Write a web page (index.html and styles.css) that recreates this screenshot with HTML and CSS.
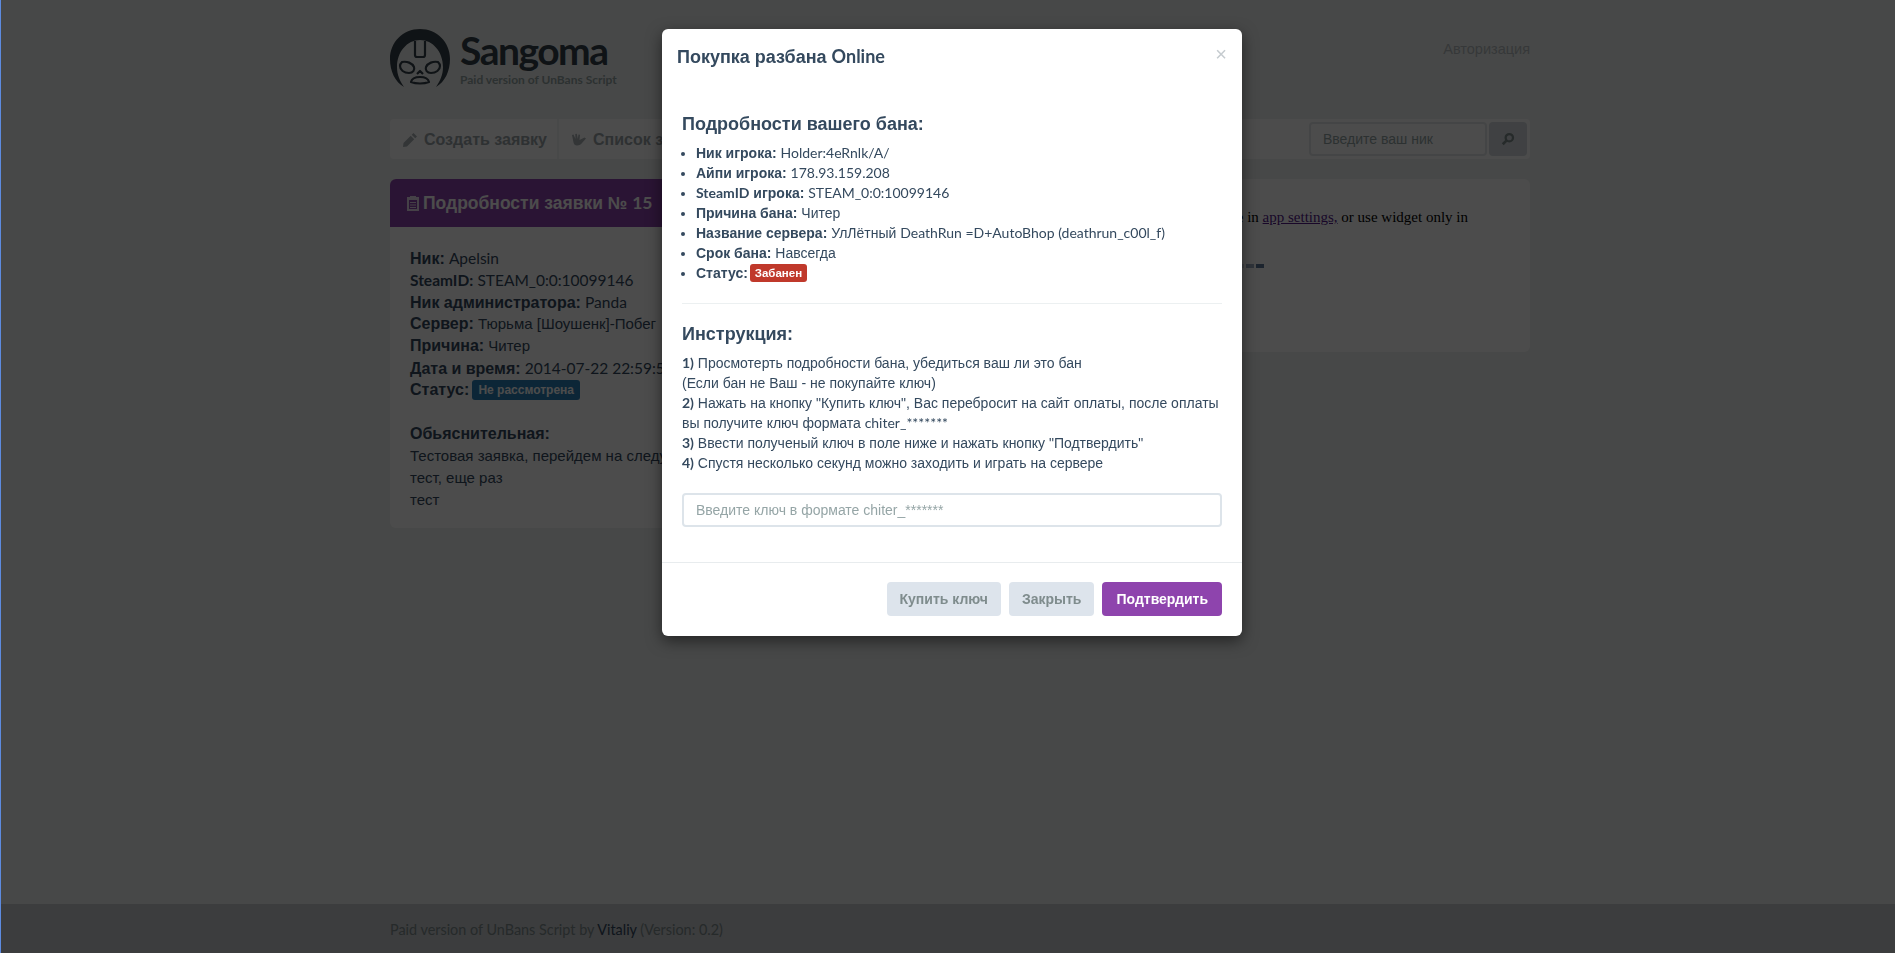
FILE: index.html
```html
<!DOCTYPE html>
<html lang="ru">
<head>
    <meta charset="UTF-8">
    <meta name="viewport" content="width=device-width, initial-scale=1.0">
    <title>Sangoma</title>
    <link rel="stylesheet" href="styles.css">
</head>
<body>
    <div class="container">
        <header class="top">
            <div class="logo">
                <svg class="logo-icon" viewBox="0 0 60 60">
                    <path d="M14 58C5 53 0 42 0 30 0 13 13 0 30 0s30 13 30 30c0 12-5 23-14 28 4-6 7-12 7-20 0-15-10-27-23-27S7 23 7 38c0 8 3 14 7 20z" fill="#35404a"/>
                    <path d="M25 12v14c0 1 1 2 2 2h6c1 0 2-1 2-2V12M12 33c5-1 10 1 12 5 1 3-1 6-5 6-5 0-9-3-9-7 0-2 1-3 2-4zM48 33c-5-1-10 1-12 5-1 3 1 6 5 6 5 0 9-3 9-7 0-2-1-3-2-4zM21 53c1-4 4-5 9-5s8 1 9 5c-5 2-13 2-18 0zM27 45l3-3 3 3" fill="none" stroke="#35404a" stroke-width="2.200" stroke-linejoin="round"/>
                </svg>
                <div>
                    <div class="logo-name">Sangoma</div>
                    <div class="logo-sub">Paid version of UnBans Script</div>
                </div>
            </div>
            <a class="login-link">Авторизация</a>
        </header>

        <nav class="menu">
            <a class="menu-item">
                <svg class="menu-icon" viewBox="0 0 16 16"><path d="M11.500 1l3.500 3.500-1.800 1.800-3.500-3.500zM8.700 3.800l3.500 3.500L5 14.500 1 15l.5-4z"/></svg>
                Создать заявку
            </a>
            <a class="menu-item">
                <svg class="menu-icon" viewBox="0 0 16 16"><path d="M1 3l1.500-.5L4.500 7l-.2-5 1.500-.2L6.800 7l.7-4.500 1.500.3L8.500 8l5-2.500 1.500 1-4 4.500c-1 1.500-2.500 2.500-5 2.500-2 0-3-1-3.500-3z"/></svg>
                Список заявок
            </a>
            <form class="menu-search">
                <input class="search-input" type="text" placeholder="Введите ваш ник">
                <button class="search-btn" type="button">
                    <svg viewBox="0 0 16 16" width="14" height="14"><circle cx="9.500" cy="6.500" r="4.200" fill="none" stroke="#7f8c8d" stroke-width="2.600"/><path d="M6.500 9.500L2 14" stroke="#7f8c8d" stroke-width="3"/></svg>
                </button>
            </form>
        </nav>

        <div class="columns">
            <section class="panel panel-ticket">
                <h3 class="panel-head">
                    <svg class="head-icon" viewBox="0 0 14 16"><path d="M1 2h3V1h6v1h3v14H1zM3 5v9h8V5zM4 7h6v1H4zM4 9.500h6v1H4zM4 12h6v1H4z" fill="#fff" fill-rule="evenodd"/></svg>
                    <span>Подробности заявки № <span class="lat">15</span></span>
                </h3>
                <div class="panel-body">
                    <p><b>Ник:</b> <span class="lat">Apelsin</span></p>
                    <p><b class="lat">SteamID:</b> <span class="lat">STEAM_0:0:10099146</span></p>
                    <p><b>Ник администратора:</b> <span class="lat">Panda</span></p>
                    <p><b>Сервер:</b> Тюрьма [Шоушенк]-Побег</p>
                    <p><b>Причина:</b> Читер</p>
                    <p><b>Дата и время:</b> <span class="lat">2014-07-22 22:59:58</span></p>
                    <p><b>Статус:</b> <span class="badge badge-blue">Не рассмотрена</span></p>
                    <p class="gap"><b>Обьяснительная:</b></p>
                    <p>Тестовая заявка, перейдем на следующий шаг</p>
                    <p>тест, еще раз</p>
                    <p>тест</p>
                </div>
            </section>
            <aside class="panel panel-widget">
                <p class="widget-error">Add this site in <a href="#">app settings,</a> or use widget only in</p>
                <div class="widget-dots"><i></i><i></i><i></i></div>
            </aside>
        </div>
    </div>

    <footer class="footer">
        <div class="footer-text">Paid version of UnBans Script by <b>Vitaliy</b> (Version: 0.2)</div>
    </footer>

    <div class="backdrop"></div>

    <div class="modal">
        <div class="modal-head">
            <span class="modal-title">Покупка разбана <span class="lat">Online</span></span>
            <span class="modal-close">×</span>
        </div>
        <div class="modal-body">
            <h5>Подробности вашего бана:</h5>
            <ul class="ban-list">
                <li><b>Ник игрока:</b> <span class="lat">Holder:4eRnlk/A/</span></li>
                <li><b>Айпи игрока:</b> <span class="lat">178.93.159.208</span></li>
                <li><b><span class="lat">SteamID</span> игрока:</b> <span class="lat">STEAM_0:0:10099146</span></li>
                <li><b>Причина бана:</b> Читер</li>
                <li><b>Название сервера:</b> УлЛётный <span class="lat">DeathRun =D+AutoBhop (deathrun_c00l_f)</span></li>
                <li><b>Срок бана:</b> Навсегда</li>
                <li><b>Статус:</b> <span class="badge badge-red">Забанен</span></li>
            </ul>
            <hr class="divider">
            <h5>Инструкция:</h5>
            <div class="steps">
                <b class="lat">1)</b> Просмотерть подробности бана, убедиться ваш ли это бан<br>
                (Если бан не Ваш - не покупайте ключ)<br>
                <b class="lat">2)</b> Нажать на кнопку "Купить ключ", Вас перебросит на сайт оплаты, после оплаты<br>
                вы получите ключ формата <span class="lat">chiter_*******</span><br>
                <b class="lat">3)</b> Ввести полученый ключ в поле ниже и нажать кнопку "Подтвердить"<br>
                <b class="lat">4)</b> Спустя несколько секунд можно заходить и играть на сервере
            </div>
            <input class="key-input" type="text" placeholder="Введите ключ в формате chiter_*******">
        </div>
        <div class="modal-foot">
            <button class="btn btn-grey" type="button">Купить ключ</button>
            <button class="btn btn-grey" type="button">Закрыть</button>
            <button class="btn btn-purple" type="button">Подтвердить</button>
        </div>
    </div>
</body>
</html>
```
FILE: styles.css
```css
* {
    box-sizing: border-box;
}

body {
    display: flex;
    flex-direction: column;
    min-height: 100vh;
    margin: 0;
    background-color: #eff2f0;
    color: #34495e;
    font-family: "Liberation Sans", Arial, sans-serif;
    font-size: 15px;
    overflow: hidden;
}

.lat {
    font-family: Lato, sans-serif;
}

.container {
    width: 1140px;
    margin-left: 390px;
}

.top {
    display: flex;
    justify-content: space-between;
    padding-top: 29px;
    height: 119px;
}

.logo {
    display: flex;
    gap: 10px;
}

.logo-icon {
    width: 60px;
    height: 60px;
}

.logo-name {
    font-family: Lato, sans-serif;
    font-size: 39px;
    font-weight: bold;
    letter-spacing: -1.500px;
    line-height: 40px;
    margin-top: 1px;
    color: #35404a;
}

.logo-sub {
    font-family: Lato, sans-serif;
    font-size: 12px;
    font-weight: bold;
    color: #95a5a6;
    margin-top: 2px;
}

.login-link {
    font-size: 14.500px;
    color: #b5bcc0;
    margin-top: 12px;
}

.menu {
    display: flex;
    align-items: center;
    height: 40px;
    background-color: #fff;
    border-radius: 4px;
}

.menu-item {
    display: flex;
    align-items: center;
    gap: 6px;
    height: 40px;
    padding: 1px 10px 0 12px;
    border-right: 2px solid #f2f4f4;
    font-size: 16px;
    font-weight: bold;
    color: #9aa3a8;
}

.menu-icon {
    width: 16px;
    height: 16px;
    fill: #aab2b6;
}

.menu-search {
    display: flex;
    gap: 2px;
    margin-left: auto;
    margin-right: 3px;
}

.search-input {
    width: 178px;
    height: 34px;
    padding: 0 12px;
    border: 2px solid #e4e8ea;
    border-radius: 4px;
    background: #fff;
    font-family: inherit;
    font-size: 14px;
}

.search-btn {
    display: flex;
    align-items: center;
    justify-content: center;
    width: 38px;
    height: 34px;
    border: 0;
    border-radius: 4px;
    background-color: #d5dbe0;
}

.columns {
    display: grid;
    grid-template-columns: 720px 1fr;
    gap: 20px;
    align-items: start;
    margin-top: 20px;
}

.panel {
    background-color: #fff;
    border-radius: 6px;
    overflow: hidden;
}

.panel-head {
    display: flex;
    align-items: center;
    gap: 3px;
    height: 48px;
    margin: 0;
    padding: 0 16px;
    background-color: #8e44ad;
    color: #fff;
    font-size: 17.500px;
}

.head-icon {
    width: 14px;
    height: 16px;
    opacity: .8;
}

.panel-body {
    height: 301px;
    padding: 20px;
    font-size: 15px;
    line-height: 22px;
}

.panel-body b {
    font-size: 16px;
}

.panel-body .lat {
    font-size: 15.500px;
}

.panel-body p {
    height: 22px;
    margin: 0;
}

.panel-body .gap {
    margin-top: 22px;
}

.badge {
    display: inline-block;
    padding: 0 5px;
    border-radius: 3px;
    color: #fff;
    font-size: 11.500px;
    font-weight: bold;
    line-height: 18px;
    vertical-align: 1px;
}

.badge-blue {
    margin-left: -1px;
    padding: 1px 6px;
    font-size: 12px;
    background-color: #2980b9;
}

.badge-red {
    margin-left: -2px;
    background-color: #c0392b;
}

.panel-widget {
    height: 173px;
    padding: 29px 62px 0 0;
}

.widget-error {
    margin: 0;
    color: #000;
    font-family: "Liberation Serif", serif;
    font-size: 15px;
    line-height: 18px;
    text-align: right;
    white-space: nowrap;
}

.widget-error a {
    color: #551a8b;
}

.widget-dots {
    display: flex;
    gap: 2px;
    margin: 38px 0 0 106px;
}

.widget-dots i {
    width: 8px;
    height: 4px;
    background-color: #5f7b99;
}

.widget-dots i:nth-child(1) {
    opacity: .3;
}

.widget-dots i:nth-child(2) {
    opacity: .6;
}

.footer {
    height: 49px;
    margin-top: auto;
    padding: 17px 0 0 390px;
    background-color: #c8ccd0;
    font-family: Lato, sans-serif;
    font-size: 14.400px;
    color: #7f8c8d;
}

.footer b {
    font-weight: normal;
    color: #34495e;
}

.backdrop {
    position: fixed;
    top: 0;
    left: 0;
    right: 0;
    bottom: 0;
    border-left: 1px solid #5d8be0;
    background-color: rgba(0, 0, 0, .7);
}

.modal {
    position: absolute;
    top: 29px;
    left: 662px;
    width: 580px;
    height: 607px;
    background-color: #fff;
    border-radius: 6px;
    box-shadow: 0 5px 15px rgba(0, 0, 0, .5);
}

.modal-head {
    display: flex;
    justify-content: space-between;
    padding: 16px 15px 0;
    height: 84px;
}

.modal-title {
    font-size: 18px;
    font-weight: bold;
}

.modal-close {
    margin-top: -2px;
    color: #c5cbcf;
    font-size: 20px;
}

.modal-body {
    height: 449px;
    padding: 0 20px;
}

.modal-body h5 {
    margin: 0;
    font-size: 18px;
    font-weight: bold;
    line-height: 22px;
}

.ban-list {
    margin: 8px 0 0;
    padding: 0 0 0 14px;
    font-size: 14px;
    line-height: 20px;
}

.divider {
    margin: 20px 0 19px;
    border: 0;
    border-top: 1px solid #ecf0f1;
}

.steps {
    margin-top: 8px;
    font-size: 14px;
    line-height: 20px;
}

.key-input {
    display: block;
    width: 100%;
    height: 34px;
    margin-top: 20px;
    padding: 0 12px;
    border: 2px solid #dde4ea;
    border-radius: 4px;
    font-family: inherit;
    font-size: 14px;
}

.modal-foot {
    display: flex;
    justify-content: flex-end;
    gap: 8px;
    padding: 19px 20px 20px;
    border-top: 1px solid #e8ecee;
}

.btn {
    height: 34px;
    padding: 0 14px;
    border: 0;
    border-radius: 4px;
    font-family: inherit;
    font-size: 14px;
    font-weight: bold;
}

.btn-grey {
    padding: 0 13px;
    background-color: #dde4ec;
    color: #7f8c8d;
}

.btn-purple {
    background-color: #8e44ad;
    color: #fff;
}

input::placeholder {
    color: #95a5a6;
    opacity: 1;
}
```
